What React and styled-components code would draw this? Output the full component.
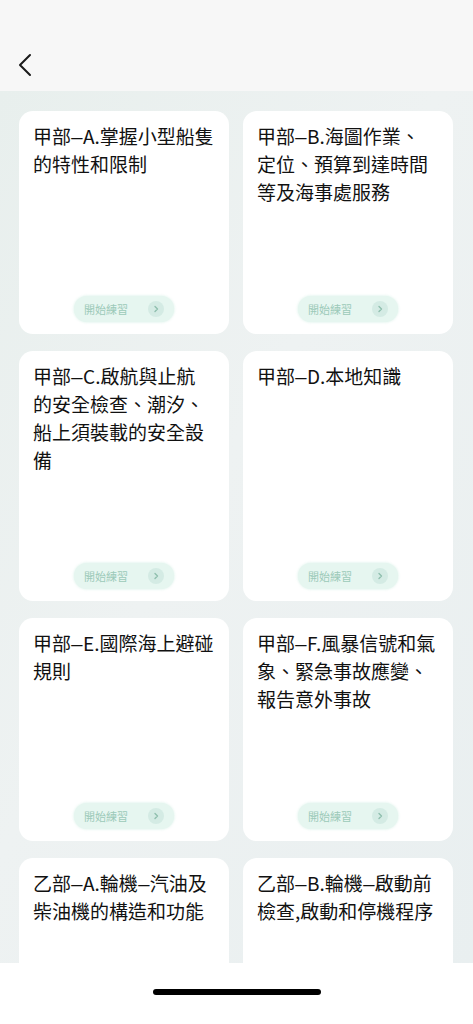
import React from 'react';
import styled, { createGlobalStyle } from 'styled-components';

const GlobalStyle = createGlobalStyle`
  html, body {
    margin: 0;
    padding: 0;
    background: #ffffff;
  }
  body {
    font-family: "Noto Sans CJK TC", "Noto Sans", sans-serif;
  }
`;

const Screen = styled.div`
  width: 473px;
  height: 1024px;
  display: flex;
  flex-direction: column;
  overflow: hidden;
`;

const Header = styled.header`
  height: 91px;
  flex-shrink: 0;
  background: #f7f7f7;
  display: flex;
  align-items: flex-start;
  padding: 52px 0 0 17px;
  box-sizing: border-box;
`;

const BackButton = styled.button`
  border: none;
  background: none;
  padding: 0;
  width: 16px;
  height: 26px;
  display: flex;
  align-items: center;
  justify-content: center;
  cursor: pointer;
`;

const Content = styled.main`
  flex: 1;
  overflow: hidden;
  background: linear-gradient(120deg, #e8efed 0%, #eef2f2 45%, #e9eff0 100%);
  padding: 20px 20px 0 19px;
`;

const Grid = styled.div`
  display: grid;
  grid-template-columns: 210px 210px;
  column-gap: 14px;
  row-gap: 17px;
`;

const Card = styled.div`
  background: #ffffff;
  border-radius: 14px;
  padding: 11px 14px 12px;
  min-height: 223px;
  box-sizing: border-box;
  display: flex;
  flex-direction: column;
`;

const Title = styled.div`
  font-size: 19px;
  line-height: 28px;
  color: #111111;
  font-weight: 400;
  margin-bottom: 89px;
`;

const Line = styled.span`
  display: block;
  white-space: nowrap;
`;

const Dash = styled.span`
  display: inline-block;
  width: 12px;
  text-align: center;
  transform: scaleX(1.35);
`;

const StartButton = styled.button`
  margin-top: auto;
  align-self: center;
  width: 100px;
  height: 26px;
  border: none;
  border-radius: 13px;
  background: #e6f6f0;
  box-shadow: 0 0 3px rgba(200, 235, 222, 0.8);
  display: flex;
  align-items: center;
  justify-content: space-between;
  padding: 0 10px 0 10px;
  box-sizing: border-box;
  font-family: "Noto Sans CJK TC", "Noto Sans", sans-serif;
  font-size: 11px;
  color: #9ccab9;
  cursor: pointer;
`;

const ArrowDot = styled.span`
  width: 16px;
  height: 16px;
  border-radius: 50%;
  background: #d4ebe4;
  display: flex;
  align-items: center;
  justify-content: center;
`;

const BottomBar = styled.div`
  height: 61px;
  flex-shrink: 0;
  background: #ffffff;
  display: flex;
  justify-content: center;
  padding-top: 26px;
  box-sizing: border-box;
`;

const HomeIndicator = styled.div`
  width: 168px;
  height: 6px;
  border-radius: 3px;
  background: #000000;
`;

const topics = [
  ['甲部–A.掌握小型船隻', '的特性和限制'],
  ['甲部–B.海圖作業、', '定位、預算到達時間', '等及海事處服務'],
  ['甲部–C.啟航與止航', '的安全檢查、潮汐、', '船上須裝載的安全設', '備'],
  ['甲部–D.本地知識'],
  ['甲部–E.國際海上避碰', '規則'],
  ['甲部–F.風暴信號和氣', '象、緊急事故應變、', '報告意外事故'],
  ['乙部–A.輪機–汽油及', '柴油機的構造和功能'],
  ['乙部–B.輪機–啟動前', '檢查,啟動和停機程序'],
];

// render en dashes a bit wider, like the system font in the screenshot
const renderLine = (text) =>
  text.split('–').flatMap((part, k) =>
    k === 0 ? [part] : [<Dash key={k}>–</Dash>, part]
  );

const App = () => {
  return (
    <Screen>
      <GlobalStyle />
      <Header>
        <BackButton aria-label="返回">
          <svg width="14" height="24" viewBox="0 0 14 24" fill="none">
            <path d="M12 2 L2 12 L12 22" stroke="#1a1a1a" strokeWidth="2" strokeLinecap="round" strokeLinejoin="round" />
          </svg>
        </BackButton>
      </Header>
      <Content>
        <Grid>
          {topics.map((lines, i) => (
            <Card key={i}>
              <Title>
                {lines.map((l, j) => (
                  <Line key={j}>{renderLine(l)}</Line>
                ))}
              </Title>
              <StartButton>
                開始練習
                <ArrowDot>
                  <svg width="8" height="8" viewBox="0 0 8 8" fill="none">
                    <path d="M3 1.5 L5.5 4 L3 6.5" stroke="#8fbfae" strokeWidth="1.4" strokeLinecap="round" strokeLinejoin="round" />
                  </svg>
                </ArrowDot>
              </StartButton>
            </Card>
          ))}
        </Grid>
      </Content>
      <BottomBar>
        <HomeIndicator />
      </BottomBar>
    </Screen>
  );
};

export default App;
